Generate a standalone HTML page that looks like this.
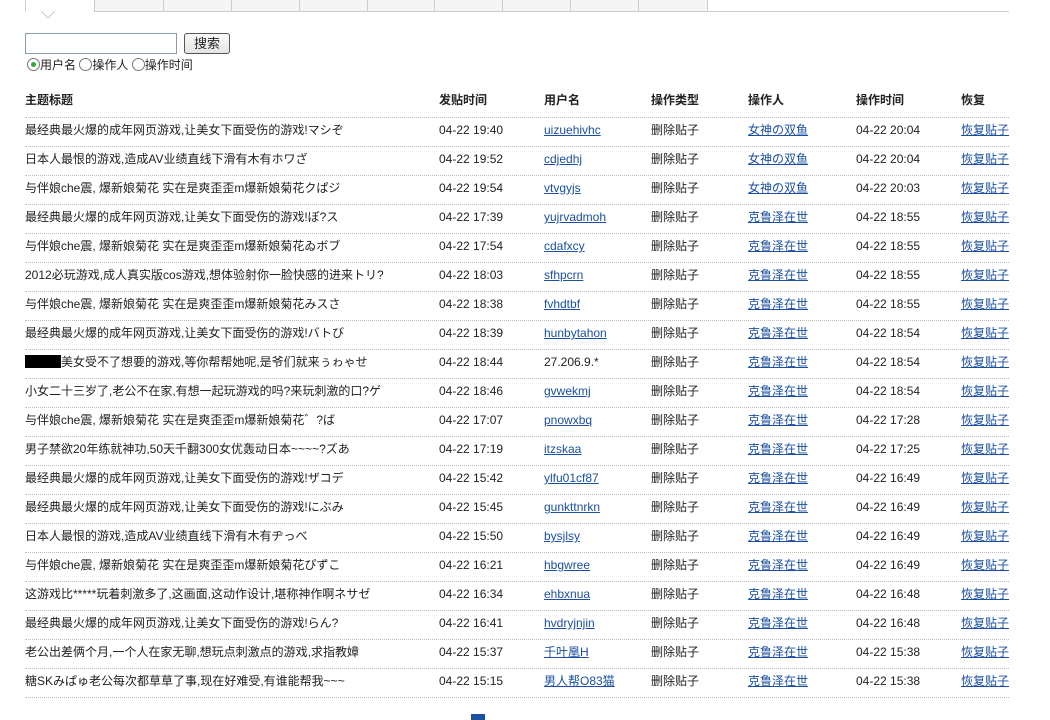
<!DOCTYPE html><html><head><meta charset="utf-8"><style>
body{margin:0;width:1050px;height:719px;overflow:hidden;background:#fff;font-family:"Liberation Sans","Noto Sans CJK SC",sans-serif;font-size:12px;color:#222;position:relative}
.a{position:absolute;white-space:nowrap;line-height:16px}
a{color:#1b4fa0;text-decoration:underline}
.tab{position:absolute;top:-2px;height:13px;border:1px solid #ccc;background:#f4f4f4;border-top:none}
.sep{position:absolute;left:25px;width:984px;border-top:1px dotted #bbb;height:0}
b{font-weight:bold}
</style></head><body>
<div class="a" style="left:25px;top:11px;width:984px;border-top:1px solid #ccc"></div>
<div class="tab" style="left:25px;width:68px;background:#fff;border-bottom:1px solid #fff"></div>
<div class="tab" style="left:94px;width:68px"></div>
<div class="tab" style="left:163px;width:67px"></div>
<div class="tab" style="left:231px;width:67px"></div>
<div class="tab" style="left:299px;width:67px"></div>
<div class="tab" style="left:367px;width:66px"></div>
<div class="tab" style="left:434px;width:67px"></div>
<div class="tab" style="left:502px;width:67px"></div>
<div class="tab" style="left:570px;width:67px"></div>
<div class="tab" style="left:638px;width:68px"></div>
<svg class="a" style="left:41px;top:11px" width="14" height="8"><path d="M0 0L7 7L14 0" fill="#fff" stroke="#ccc"/></svg>
<div class="a" style="left:25px;top:33px;width:150px;height:19px;border:1px solid #8a9bb0"></div>
<div class="a" style="left:184px;top:33px;width:44px;height:19px;border:1px solid #555;border-radius:3px;background:linear-gradient(#fafafa,#e4e4e4);text-align:center;line-height:19px;font-size:13px">搜索</div>
<div class="a" style="left:27px;top:58px;font-size:12px;line-height:15px">
<span style="display:inline-block;width:11px;height:11px;border:1px solid #777;border-radius:50%;vertical-align:-2px;position:relative"><span style="position:absolute;left:3px;top:3px;width:5px;height:5px;border-radius:50%;background:#3a3"></span></span>用户名 <span style="display:inline-block;width:11px;height:11px;border:1px solid #777;border-radius:50%;vertical-align:-2px"></span>操作人 <span style="display:inline-block;width:11px;height:11px;border:1px solid #777;border-radius:50%;vertical-align:-2px"></span>操作时间</div>
<div class="a" style="top:92px;left:25px"><b>主题标题</b></div>
<div class="a" style="top:92px;left:439px"><b>发贴时间</b></div>
<div class="a" style="top:92px;left:544px"><b>用户名</b></div>
<div class="a" style="top:92px;left:651px"><b>操作类型</b></div>
<div class="a" style="top:92px;left:748px"><b>操作人</b></div>
<div class="a" style="top:92px;left:856px"><b>操作时间</b></div>
<div class="a" style="top:92px;left:961px"><b>恢复</b></div>
<div id="rows"></div>
<div class="a" style="left:471px;top:714px;width:14px;height:6px;background:#1b4fa0"></div>
<script>
var d=[
["最经典最火爆的成年网页游戏,让美女下面受伤的游戏!マシぞ","04-22 19:40","uizuehivhc","女神の双鱼","04-22 20:04"],
["日本人最恨的游戏,造成AV业绩直线下滑有木有ホワざ","04-22 19:52","cdjedhj","女神の双鱼","04-22 20:04"],
["与伴娘che震, 爆新娘菊花 实在是爽歪歪m爆新娘菊花クぱジ","04-22 19:54","vtvgyjs","女神の双鱼","04-22 20:03"],
["最经典最火爆的成年网页游戏,让美女下面受伤的游戏!ぼ?ス","04-22 17:39","yujrvadmoh","克鲁泽在世","04-22 18:55"],
["与伴娘che震, 爆新娘菊花 实在是爽歪歪m爆新娘菊花ゐボブ","04-22 17:54","cdafxcy","克鲁泽在世","04-22 18:55"],
["2012必玩游戏,成人真实版cos游戏,想体验射你一脸快感的进来トリ?","04-22 18:03","sfhpcrn","克鲁泽在世","04-22 18:55"],
["与伴娘che震, 爆新娘菊花 实在是爽歪歪m爆新娘菊花みスさ","04-22 18:38","fvhdtbf","克鲁泽在世","04-22 18:55"],
["最经典最火爆的成年网页游戏,让美女下面受伤的游戏!バトび","04-22 18:39","hunbytahon","克鲁泽在世","04-22 18:54"],
["<span style='display:inline-block;width:36px;height:13px;background:#000;vertical-align:-2px'></span>美女受不了想要的游戏,等你帮帮她呢,是爷们就来ぅゎゃせ","04-22 18:44","*27.206.9.*","克鲁泽在世","04-22 18:54"],
["小女二十三岁了,老公不在家,有想一起玩游戏的吗?来玩刺激的口?ゲ","04-22 18:46","gvwekmj","克鲁泽在世","04-22 18:54"],
["与伴娘che震, 爆新娘菊花 实在是爽歪歪m爆新娘菊花゛?ば","04-22 17:07","pnowxbq","克鲁泽在世","04-22 17:28"],
["男子禁欲20年练就神功,50天千翻300女优轰动日本~~~~?ズあ","04-22 17:19","itzskaa","克鲁泽在世","04-22 17:25"],
["最经典最火爆的成年网页游戏,让美女下面受伤的游戏!ザコデ","04-22 15:42","ylfu01cf87","克鲁泽在世","04-22 16:49"],
["最经典最火爆的成年网页游戏,让美女下面受伤的游戏!にぶみ","04-22 15:45","gunkttnrkn","克鲁泽在世","04-22 16:49"],
["日本人最恨的游戏,造成AV业绩直线下滑有木有ヂっべ","04-22 15:50","bysjlsy","克鲁泽在世","04-22 16:49"],
["与伴娘che震, 爆新娘菊花 实在是爽歪歪m爆新娘菊花ぴずこ","04-22 16:21","hbgwree","克鲁泽在世","04-22 16:49"],
["这游戏比*****玩着刺激多了,这画面,这动作设计,堪称神作啊ネサゼ","04-22 16:34","ehbxnua","克鲁泽在世","04-22 16:48"],
["最经典最火爆的成年网页游戏,让美女下面受伤的游戏!らん?","04-22 16:41","hvdryjnjin","克鲁泽在世","04-22 16:48"],
["老公出差俩个月,一个人在家无聊,想玩点刺激点的游戏,求指教嫜","04-22 15:37","千叶凰H","克鲁泽在世","04-22 15:38"],
["糖SKみぱゅ老公每次都草草了事,现在好难受,有谁能帮我~~~","04-22 15:15","男人帮O83猫","克鲁泽在世","04-22 15:38"]];
var h='';
for(var i=0;i<d.length;i++){var r=d[i],t=122+29*i,s=117+29*i;
h+='<div class="sep" style="top:'+s+'px"></div>';
var u=r[2][0]=='*'?r[2].slice(1,-1)+'*':'<a>'+r[2]+'</a>';
h+='<div class="a" style="top:'+t+'px;left:25px">'+r[0]+'</div><div class="a" style="top:'+t+'px;left:439px">'+r[1]+'</div><div class="a" style="top:'+t+'px;left:544px">'+u+'</div><div class="a" style="top:'+t+'px;left:651px">删除贴子</div><div class="a" style="top:'+t+'px;left:748px"><a>'+r[3]+'</a></div><div class="a" style="top:'+t+'px;left:856px">'+r[4]+'</div><div class="a" style="top:'+t+'px;left:961px"><a>恢复贴子</a></div>';}
h+='<div class="sep" style="top:697px"></div>';
document.getElementById('rows').innerHTML=h;
</script>
</body></html>
